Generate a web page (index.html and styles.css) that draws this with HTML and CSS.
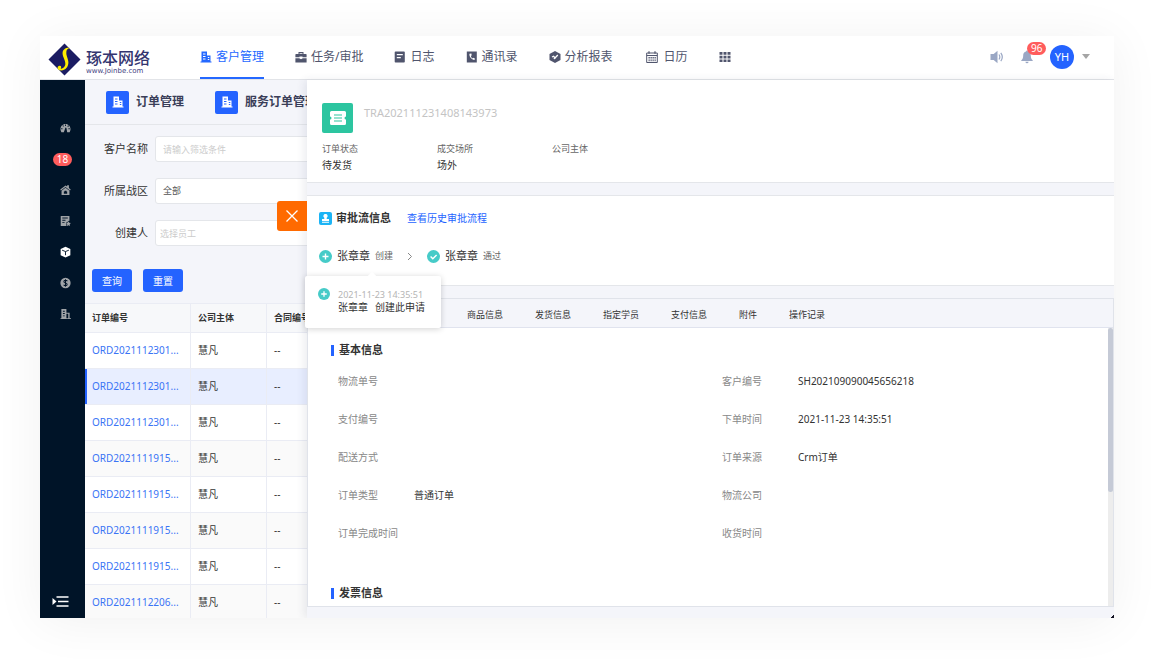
FILE: index.html
```html
<!DOCTYPE html>
<html lang="zh-CN">
<head>
<meta charset="utf-8">
<title>琢本网络 - 订单管理</title>
<link rel="stylesheet" href="styles.css">
</head>
<body>
<div class="window">
  <header class="topbar">
    <a class="brand" href="#">
      <svg class="brand-mark" viewBox="0 0 34 34"><path d="M17 0.500 33.500 17 17 33.500 0.500 17Z" fill="#1b1c62"/><path d="M22.500 5c-4-.5-7.500 1.500-7.500 5.500 0 4 3.600 8 2.800 12-.6 2.800-2.800 4.300-4.800 3.900 1-.8.8-2.800-.8-2.900-1.800-.1-2.700 1.400-2.200 2.900.8 2.200 4.200 2.500 7 1 2.900-1.700 4.600-5.300 3.800-9.200-.7-3.500-2.400-6-1.900-9.200.3-1.900 1.500-3.200 3.600-4Z" fill="#fff000"/></svg>
      <span class="brand-text"><span class="brand-name">琢本网络</span><span class="brand-url">www.Joinbe.com</span></span>
    </a>
    <nav class="nav">
      <a class="nav-item active" href="#"><svg class="ico" viewBox="0 0 12 12"><path fill-rule="evenodd" d="M1.500.5h5.500v4h3.500v6h1v1H.5v-1h1ZM3 2.500v1h2.500v-1ZM3 5v1h2.500V5Zm0 2.500v1h2.500v-1ZM7.800 6v.9h1.500V6Zm0 2v.9h1.500V8Z"/></svg>客户管理</a>
      <a class="nav-item" href="#"><svg class="ico" viewBox="0 0 12 12"><path fill-rule="evenodd" d="M3.500 3V1h5v2H11q.6 0 .6.700V6.300H7.500v-.8h-3v.8H.4V3.700Q.4 3 1 3Zm1-.8V3h3v-.8ZM.4 7.200h3.800l1.800 1 1.800-1h3.800v4.300H.4Z"/></svg>任务/审批</a>
      <a class="nav-item" href="#"><svg class="ico" viewBox="0 0 12 12"><path fill-rule="evenodd" d="M1.500.5h8.500q.8 0 .8.800v9.400q0 .8-.8.800H1.500q-.8 0-.8-.8V1.300q0-.8.800-.8ZM2.800 3v1.200h6V3Zm0 3v1.200h4V6Z"/></svg>日志</a>
      <a class="nav-item" href="#"><svg class="ico" viewBox="0 0 12 12"><path d="M.8.500h10v11H.8Z"/><path d="M3.500 2.800c-.6 2.700 2 6 5 6.200l.4-1.500-1.700-.8-.8.700C5.400 6.600 5 5.800 4.900 4.800l.8-.4-.3-2Z" fill="#fff"/></svg>通讯录</a>
      <a class="nav-item" href="#"><svg class="ico" viewBox="0 0 12 12"><path d="M6 0 11.500 3v6L6 12 .5 9V3Z"/><path d="m3 6 1.600-.8L6 7l2.800-3" fill="none" stroke="#fff" stroke-width="1.300"/><circle cx="5.500" cy="7.300" r=".9" fill="#fff"/></svg>分析报表</a>
      <a class="nav-item" href="#"><svg class="ico wide" viewBox="0 0 12 12"><path d="M.7 2h10.600v9.500H.7Z M.7 4.500h10.600" fill="none" stroke="currentColor"/><path d="M3 .3v2.500M9 .3v2.500" stroke="currentColor" stroke-width="1.200"/><path d="M2.500 6.500h7.300M2.500 8h7.300M2.500 9.700h7.300" stroke="currentColor" stroke-dasharray="1.300 .7"/></svg>日历</a>
      <a class="nav-item" href="#" aria-label="更多应用"><svg class="ico" viewBox="0 0 12 12"><path d="M.5 1h3v2.700h-3Zm4 0h3v2.700h-3Zm4 0h3v2.700h-3ZM.5 4.700h3v2.700h-3Zm4 0h3v2.700h-3Zm4 0h3v2.700h-3ZM.5 8.400h3v2.700h-3Zm4 0h3v2.700h-3Zm4 0h3v2.700h-3Z"/></svg></a>
    </nav>
    <div class="tools">
      <button class="tool" aria-label="声音"><svg width="14" height="14" viewBox="0 0 14 14"><path d="M.5 4h3.200L7.500.8v12.400L3.700 10H.5Z" fill="#9aa7c4"/><path d="M9 4.500q1.600 2.500 0 5M10.800 2.800q3 4.200 0 8.400" fill="none" stroke="#9aa7c4" stroke-width="1.200"/></svg></button>
      <button class="tool bell" aria-label="通知"><svg width="12" height="14" viewBox="0 0 12 14"><path d="M6 .5q.9 0 .9 1C9 2 9.800 3.500 9.800 5.500c0 3 .7 3.700 1.900 4.700v.8H.3v-.8c1.200-1 1.900-1.700 1.900-4.700 0-2 .8-3.500 2.900-4q0-1 .9-1ZM4.400 11.800h3.200Q7.400 13.300 6 13.300t-1.600-1.500Z" fill="#9aa7c4"/></svg><span class="badge">96</span></button>
      <button class="user"><span class="avatar">YH</span><svg width="8" height="5" viewBox="0 0 8 5"><path d="M0 0h8L4 5Z" fill="#a5a5a5"/></svg></button>
    </div>
  </header>

  <div class="body">
    <aside class="side">
      <a href="#" aria-label="仪表盘"><svg class="sico" viewBox="0 0 12 12"><path fill-rule="evenodd" d="M1.500 10.500C-1 6.500 1.500 1.500 6 1.500s7 5 4.500 9H7.800L7 6 6 5.500 4.200 10.500ZM5.500 2.300v1.500h1V2.300ZM2.700 3.600l.8 1 .8-.7-.9-1ZM9 3l-1 1 .8.800 1-1ZM1.200 6.300v1h1.500v-1Zm8 0v1h1.500v-1Z"/></svg></a>
      <a class="side-count" href="#"><span class="badge">18</span></a>
      <a href="#" aria-label="首页"><svg class="sico" viewBox="0 0 12 12"><path fill-rule="evenodd" d="M.3 5.500 6 1l1.800 1.300V.7h1.900v3l2 1.800-.8 1L6 2.600 1 6.500ZM6 3.600l4.300 3.300v4.600H1.700V6.900Zm-1.800 4v2.600h3.600V7.600H7V6.700H5v.9Z"/></svg></a>
      <a href="#" aria-label="订单"><svg class="sico" viewBox="0 0 12 12"><path fill-rule="evenodd" d="M.8.500h9.500v5.200L8.800 6 8 7.500H6.500L7 9.500V11.500H.8ZM2.500 2.300v1h6v-1Zm0 2.400v1H6v-1Zm0 2.600v1H5v-1Z"/><path d="m9.300 6.300.8 1.700 1.700.2-1.200 1.300.3 1.900-1.600-.9-1.700.9.300-1.900L6.700 8.200 8.500 8Z"/></svg></a>
      <a class="on" href="#" aria-label="产品"><svg class="sico" viewBox="0 0 12 12"><path d="M6 .2 11.300 2.600v7L6 11.900.7 9.600v-7Z"/><path d="M2.300 4 6 5.500 9.700 4M6 5.500v4" fill="none" stroke="#001428"/></svg></a>
      <a href="#" aria-label="财务"><svg class="sico" viewBox="0 0 12 12"><circle cx="6" cy="6" r="5.600"/><path d="M8 4Q7.500 3 6 3q-1.800 0-1.800 1.400Q4.200 5.700 6 6t1.800 1.600Q7.800 9 6 9 4.500 9 4 8M6 1.800v8.400" fill="none" stroke="#001428" stroke-width="1.100"/></svg></a>
      <a href="#" aria-label="企业"><svg class="sico" viewBox="0 0 12 12"><path fill-rule="evenodd" d="M1.500.5h5.500v4h3.500v6H12v1H.5v-1h1ZM3.200 2.500v1h2v-1Zm0 2.500v1h2V5Zm0 2.500v1h2v-1ZM7 5.800v4.700h2V5.800Z"/></svg></a>
      <button class="expand" aria-label="展开菜单"><svg width="17" height="11" viewBox="0 0 17 11"><path d="M.5 2 4.500 5.500.5 9Z" fill="#fff"/><path d="M4.500 1h12M6 5.500h10.500M4.500 10h12" stroke="#fff" stroke-width="1.500"/></svg></button>
    </aside>

    <main class="list">
      <div class="modules">
        <a class="module" href="#"><span class="module-ico"><svg class="ico" viewBox="0 0 12 12"><path fill-rule="evenodd" d="M1.500.5h5.500v4h3.500v6h1v1H.5v-1h1ZM3 2.500v1h2.500v-1ZM3 5v1h2.500V5Zm0 2.500v1h2.500v-1ZM7.800 6v.9h1.500V6Zm0 2v.9h1.500V8Z"/></svg></span>订单管理</a>
        <a class="module" href="#"><span class="module-ico"><svg class="ico" viewBox="0 0 12 12"><path fill-rule="evenodd" d="M1.500.5h5.500v4h3.500v6h1v1H.5v-1h1ZM3 2.500v1h2.500v-1ZM3 5v1h2.500V5Zm0 2.500v1h2.500v-1ZM7.800 6v.9h1.500V6Zm0 2v.9h1.500V8Z"/></svg></span>服务订单管理</a>
      </div>
      <form class="filters">
        <label for="f-name">客户名称</label><input id="f-name" type="text" placeholder="请输入筛选条件">
        <label for="f-zone">所属战区</label><select id="f-zone"><option>全部</option></select>
        <label for="f-user">创建人</label><input id="f-user" class="tight" type="text" placeholder="选择员工">
        <div class="actions"><button type="button">查询</button><button type="button">重置</button></div>
      </form>
      <table class="orders">
        <thead><tr><th class="c-no">订单编号</th><th class="c-org">公司主体</th><th>合同编号</th></tr></thead>
        <tbody>
          <tr><td><a href="#">ORD2021112301...</a></td><td>慧凡</td><td>--</td></tr>
          <tr class="selected"><td><a href="#">ORD2021112301...</a></td><td>慧凡</td><td>--</td></tr>
          <tr><td><a href="#">ORD2021112301...</a></td><td>慧凡</td><td>--</td></tr>
          <tr><td><a href="#">ORD2021111915...</a></td><td>慧凡</td><td>--</td></tr>
          <tr><td><a href="#">ORD2021111915...</a></td><td>慧凡</td><td>--</td></tr>
          <tr><td><a href="#">ORD2021111915...</a></td><td>慧凡</td><td>--</td></tr>
          <tr><td><a href="#">ORD2021111915...</a></td><td>慧凡</td><td>--</td></tr>
          <tr><td><a href="#">ORD2021112206...</a></td><td>慧凡</td><td>--</td></tr>
        </tbody>
      </table>
    </main>

    <section class="drawer">
      <button class="close" aria-label="关闭"><svg width="14" height="14" viewBox="0 0 14 14"><path d="m1.500 1.500 11 11m0-11-11 11" stroke="#fff" stroke-width="1.300"/></svg></button>

      <div class="summary">
        <div class="summary-head">
          <span class="ticket"><svg width="16" height="14" viewBox="0 0 16 14"><path fill="#fff" d="M1.500 0h13Q16 0 16 1.500v4a1.500 1.500 0 0 0 0 3v4q0 1.500-1.500 1.500h-13Q0 14 0 12.500v-4a1.500 1.500 0 0 0 0-3v-4Q0 0 1.500 0Z"/><path d="M4 4h8M4 7h8M4 10h8" stroke="#2cc5a0" stroke-width="1.200"/></svg></span>
          <span class="trade-no">TRA202111231408143973</span>
        </div>
        <dl class="facts">
          <div><dt>订单状态</dt><dd>待发货</dd></div>
          <div><dt>成交场所</dt><dd>场外</dd></div>
          <div><dt>公司主体</dt><dd></dd></div>
        </dl>
      </div>

      <div class="approval">
        <div class="approval-head">
          <svg width="13" height="13" viewBox="0 0 13 13"><rect width="13" height="13" rx="2" fill="#1cb4f5"/><path d="M6.500 2a2 2 0 0 1 1.200 3.700V7H10v2H3V7h2.300V5.700A2 2 0 0 1 6.500 2ZM3 9.800h7v1H3Z" fill="#fff"/></svg>
          <h2>审批流信息</h2>
          <a href="#">查看历史审批流程</a>
        </div>
        <div class="flow">
          <div class="step">
            <svg width="13" height="13" viewBox="0 0 13 13"><circle cx="6.500" cy="6.500" r="6.500" fill="#46cbc8"/><path d="M6.500 3.500v6M3.500 6.500h6" stroke="#fff" stroke-width="1.400"/></svg>
            <b>张章章</b><span>创建</span>
            <div class="tip">
              <svg width="12" height="12" viewBox="0 0 13 13"><circle cx="6.500" cy="6.500" r="6.500" fill="#46cbc8"/><path d="M6.500 3.500v6M3.500 6.500h6" stroke="#fff" stroke-width="1.400"/></svg>
              <div><time>2021-11-23 14:35:51</time><p><span>张章章</span><span>创建此申请</span></p></div>
            </div>
          </div>
          <svg width="6" height="9" viewBox="0 0 6 9"><path d="m1 1 3.500 3.500L1 8" fill="none" stroke="#888"/></svg>
          <div class="step">
            <svg width="13" height="13" viewBox="0 0 13 13"><circle cx="6.500" cy="6.500" r="6.500" fill="#46cbc8"/><path d="m3.600 6.500 2.200 2.200 3.800-3.800" fill="none" stroke="#fff" stroke-width="1.400"/></svg>
            <b>张章章</b><span>通过</span>
          </div>
        </div>
      </div>

      <div class="detail">
        <nav class="tabs"><a href="#">商品信息</a><a href="#">发货信息</a><a href="#">指定学员</a><a href="#">支付信息</a><a href="#">附件</a><a href="#">操作记录</a></nav>
        <div class="pane">
          <div class="pane-content">
            <h3>基本信息</h3>
            <dl class="fields">
              <div><dt>物流单号</dt><dd></dd></div><div><dt>客户编号</dt><dd>SH202109090045656218</dd></div>
              <div><dt>支付编号</dt><dd></dd></div><div><dt>下单时间</dt><dd>2021-11-23 14:35:51</dd></div>
              <div><dt>配送方式</dt><dd></dd></div><div><dt>订单来源</dt><dd>Crm订单</dd></div>
              <div><dt>订单类型</dt><dd>普通订单</dd></div><div><dt>物流公司</dt><dd></dd></div>
              <div><dt>订单完成时间</dt><dd></dd></div><div><dt>收货时间</dt><dd></dd></div>
            </dl>
            <h3>发票信息</h3>
          </div>
          <div class="scroll"><div class="thumb"></div></div>
        </div>
      </div>
    </section>
  </div>
  <span class="grip"></span>
</div>
</body>
</html>
```
FILE: styles.css
```css
* { box-sizing: border-box; }
body {
  margin: 0;
  padding: 36px 40px 44px;
  height: 100vh;
  background: #fff;
  color: #333;
  font: 10px/16px "Noto Sans", "Noto Sans CJK SC", sans-serif;
}
a { color: inherit; text-decoration: none; }
button, input, select { font: inherit; margin: 0; }
button { border: 0; padding: 0; background: none; }
svg { flex: none; display: block; }
h2, h3, dl, dd, p { margin: 0; }

.window {
  position: relative;
  display: flex;
  flex-direction: column;
  height: 100%;
  overflow: hidden;
  box-shadow: 0 4px 48px rgba(0, 0, 0, .06);
}
.ico { width: 12px; height: 12px; fill: currentColor; }
.ico.wide { width: 16px; }
.badge {
  display: block;
  padding: 0 4px;
  border-radius: 7px;
  background: #ff5c5c;
  color: #fff;
  font-size: 10px;
  line-height: 13px;
}

/* Top bar */
.topbar {
  display: flex;
  flex: none;
  height: 44px;
  padding: 0 24px 0 8px;
  background: #fff;
  border-bottom: 1px solid #e2e4e8;
}
.brand { display: flex; width: 152px; padding-top: 7px; gap: 5px; color: #33356f; }
.brand-mark { width: 33px; height: 33px; }
.brand-text { display: flex; flex-direction: column; padding-top: 6px; }
.brand-name { font-size: 16px; line-height: 18px; font-weight: 500; white-space: nowrap; }
.brand-url { font: 7px/9px "DejaVu Sans", sans-serif; color: #3f4180; }
.nav { display: flex; flex: 1; gap: 31px; }
.nav-item {
  display: flex;
  align-items: center;
  gap: 4px;
  padding-top: 1px;
  border-bottom: 2px solid transparent;
  color: #50556d;
  font-size: 12px;
  white-space: nowrap;
}
.nav-item.active { color: #2468ff; border-color: #2468ff; }
.tools { display: flex; align-items: center; gap: 17px; padding-bottom: 2px; }
.bell { position: relative; }
.bell .badge { position: absolute; left: 6px; top: -8px; }
.user { display: flex; align-items: center; gap: 8px; }
.avatar {
  width: 24px;
  height: 24px;
  border-radius: 50%;
  background: #2463ff;
  color: #fff;
  font-size: 11px;
  line-height: 24px;
}

/* Layout below the top bar */
.body { display: flex; flex: 1; min-height: 0; }
.side {
  display: flex;
  flex: none;
  flex-direction: column;
  align-items: center;
  width: 45px;
  padding: 40px 0 11px 5px;
  gap: 15px;
  background: #001428;
  color: #a0a4a8;
}
.side a { display: flex; align-items: center; height: 16px; }
.side .on { color: #fff; }
.side .side-count { margin-right: 5px; }
.sico { width: 11px; height: 12px; fill: currentColor; }
.expand { margin-top: auto; margin-right: 10px; }

/* Order list */
.list { flex: 0 0 222px; overflow: hidden; background: #f4f5fa; }
.modules {
  display: flex;
  align-items: center;
  gap: 31px;
  height: 45px;
  padding-left: 21px;
  border-bottom: 1px solid #e4e6ea;
}
.module { display: flex; align-items: center; gap: 7px; font-size: 12px; font-weight: 700; color: #3a3e58; white-space: nowrap; }
.module-ico { display: flex; align-items: center; justify-content: center; width: 23px; height: 23px; border-radius: 2px; background: #2463ff; color: #fff; }
.filters {
  display: grid;
  grid-template-columns: 56px 240px;
  align-items: center;
  row-gap: 16px;
  column-gap: 7px;
  padding: 11px 0 11px 7px;
}
.filters label { text-align: right; font-size: 11px; }
.filters input, .filters select {
  appearance: none;
  width: 100%;
  height: 26px;
  padding: 0 7px;
  border: 1px solid #e4e6ea;
  border-radius: 3px;
  background: #fff;
  color: #555;
  font-size: 9px;
}
.filters .tight { padding-left: 4px; }
.filters ::placeholder { color: #ccc; opacity: 1; }
.actions { display: flex; grid-column: 1 / 3; gap: 11px; padding-top: 7px; }
.actions button { width: 40px; height: 23px; border-radius: 3px; background: #2463ff; color: #fff; font-size: 10px; }

.orders { width: 320px; table-layout: fixed; border-collapse: separate; border-spacing: 0; }
.orders th, .orders td {
  height: 36px;
  padding: 0 7px 1px;
  border-right: 1px solid #eaecf4;
  border-bottom: 1px solid #eaecf4;
  background: #fff;
  text-align: left;
  white-space: nowrap;
}
.orders th { height: 30px; border-top: 1px solid #eaecf4; background: #f7f8fa; font-size: 9px; font-weight: 700; }
.c-no { width: 106px; }
.c-org { width: 76px; }
.orders tr:nth-child(even) td { background: #fafafa; }
.orders tr.selected td { background: #e8eeff; }
.orders tr.selected td:first-child { box-shadow: inset 2px 0 #2463ff; }
.orders a { color: #3a74f5; }

/* Order drawer */
.drawer {
  position: relative;
  display: flex;
  flex: 1;
  flex-direction: column;
  min-width: 0;
  background: #f4f5fa;
  box-shadow: -3px 0 8px rgba(40, 50, 90, .09);
}
.close {
  position: absolute;
  top: 121px;
  right: 100%;
  display: flex;
  align-items: center;
  justify-content: center;
  width: 30px;
  height: 30px;
  border-radius: 3px 0 0 3px;
  background: #ff6a00;
}
.summary { padding: 23px 15px 8px; background: #fff; border-bottom: 1px solid #e4e6ea; }
.summary-head { display: flex; gap: 11px; }
.ticket { display: flex; align-items: center; justify-content: center; width: 31px; height: 30px; border-radius: 2px; background: #2cc5a0; }
.trade-no { padding-top: 2px; color: #c4c4c4; font-size: 11px; }
.facts { display: flex; padding-top: 7px; }
.facts div { width: 115px; }
.facts dt { color: #666; font-size: 9px; line-height: 17px; }
.facts dd { min-height: 17px; line-height: 17px; }

.approval { margin: 12px 0; padding: 14px 12px 21px; background: #fff; border: solid #e4e6ea; border-width: 1px 0; }
.approval-head { display: flex; align-items: center; gap: 4px; }
.approval-head h2 { font-size: 11px; line-height: 16px; }
.approval-head a { padding-left: 12px; color: #2463ff; }
.flow { display: flex; align-items: center; gap: 14px; padding-top: 22px; }
.step { position: relative; display: flex; align-items: center; gap: 5px; }
.step > b { font-size: 11px; font-weight: 400; }
.step > span { color: #666; font-size: 9px; }
.tip {
  position: absolute;
  top: 28px;
  left: -14px;
  z-index: 1;
  display: flex;
  gap: 8px;
  width: 136px;
  padding: 12px 12px 14px 13px;
  background: #fff;
  border-radius: 2px;
  box-shadow: 0 1px 6px rgba(0, 0, 0, .18);
  white-space: nowrap;
  line-height: 13px;
}
.tip::before {
  content: "";
  position: absolute;
  top: -3px;
  left: 64px;
  width: 6px;
  height: 6px;
  background: #fff;
  transform: rotate(45deg);
}
.tip time { display: block; color: #b4b4b4; font-size: 9px; }
.tip p { display: flex; gap: 7px; }

.detail { display: flex; flex: 1; flex-direction: column; min-height: 0; margin-bottom: 11px; border: 1px solid #e0e3ea; }
.tabs { display: flex; align-items: center; flex: none; gap: 32px; height: 29px; padding: 4px 0 0 159px; border-bottom: 1px solid #e0e3ee; font-size: 9px; }
.pane { display: flex; flex: 1; min-height: 0; background: #fff; }
.pane-content { flex: 1; overflow: hidden; padding: 14px 2px 0 23px; }
.pane h3 { display: flex; align-items: center; gap: 5px; font-size: 11px; line-height: 16px; }
.pane h3::before { content: ""; width: 3px; height: 11px; background: #2463ff; }
.fields { display: grid; grid-template-columns: 1fr 1fr; padding: 4px 0 33px 7px; }
.fields div { display: flex; align-items: center; gap: 16px; height: 38px; }
.fields dt { min-width: 60px; color: #888; }
.scroll { flex: none; width: 5px; background: #ededed; }
.thumb { height: 59%; border-radius: 3px; background: #c5cad6; }

.grip { position: absolute; right: 0; bottom: 0; width: 4px; height: 3px; background: linear-gradient(to bottom right, transparent 50%, #101020 50%); }
```
